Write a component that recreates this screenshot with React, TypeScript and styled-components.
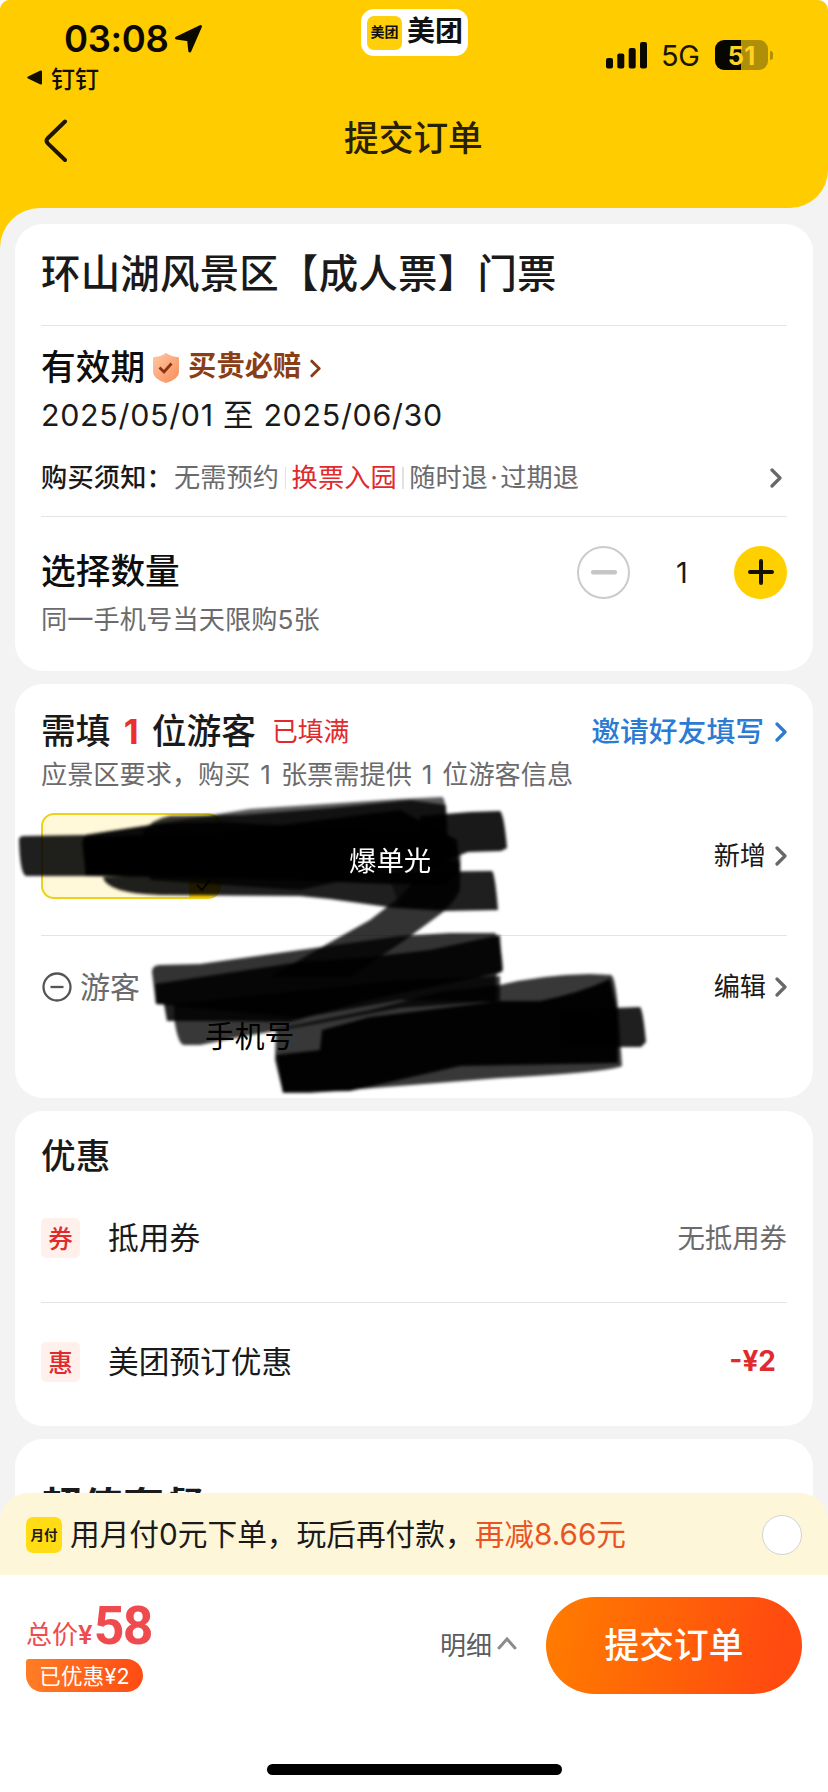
import React from "react";
import styled, { createGlobalStyle } from "styled-components";

const Global = createGlobalStyle`
  * { box-sizing: border-box; }
  html, body { margin: 0; padding: 0; background: #fff; }
  body {
    font-family: Inter, "Noto Sans CJK SC", sans-serif;
    color: #1a1a1a;
    -webkit-font-smoothing: antialiased;
  }
`;

const Screen = styled.div`
  width: 828px;
  height: 1792px;
  display: flex;
  flex-direction: column;
  overflow: hidden;
  background: #fff;
`;

const Viewport = styled.div`
  height: 1575px;
  flex: none;
  overflow: hidden;
  background: linear-gradient(90deg, #ffcc00 50%, #f3f3f4 50%);
  border-radius: 10px 10px 0 0;
`;

const Header = styled.header`
  height: 208px;
  background: #ffcc00;
  border-radius: 0 0 38px 0;
`;

const StatusBar = styled.div`
  height: 96px;
  display: grid;
  grid-template-columns: 361px 107px 1fr;
`;

const StatusLeft = styled.div`
  padding: 17px 0 0 27px;
`;

const Clock = styled.div`
  height: 43px;
  padding-left: 37px;
  display: flex;
  align-items: center;
  gap: 6px;
  font-size: 36.5px;
  font-weight: 600;
  color: #0c0a00;
  letter-spacing: -0.4px;
`;

const BackApp = styled.div`
  height: 34px;
  display: flex;
  align-items: center;
  gap: 9px;
  font-size: 24px;
  font-weight: 500;
  color: #120e00;
`;

const BrandPill = styled.div`
  height: 47px;
  margin-top: 9px;
  padding: 0 6px;
  display: flex;
  align-items: center;
  gap: 5px;
  border-radius: 13px;
  background: #fff;
  font-size: 28px;
  font-weight: 700;
  line-height: 30px;
  color: #111;
  white-space: nowrap;
`;

const BrandName = styled.span`
  padding-bottom: 3px;
`;

const BrandIcon = styled.span`
  width: 35px;
  height: 34px;
  flex: none;
  display: flex;
  align-items: center;
  justify-content: center;
  padding-bottom: 1px;
  border-radius: 7px;
  background: #ffcf0a;
  font-size: 14px;
  font-weight: 700;
`;

const StatusRight = styled.div`
  height: 34px;
  margin-top: 38px;
  padding-left: 138px;
  display: flex;
  align-items: center;
  font-size: 29px;
  font-weight: 400;
  color: #1a1400;
`;

const Network = styled.span`
  width: 52px;
  padding-left: 13px;
  letter-spacing: -0.3px;
`;

const Battery = styled.span`
  width: 53px;
  height: 30px;
  margin-left: 15px;
  display: flex;
  align-items: center;
  justify-content: center;
  border-radius: 9px;
  background: linear-gradient(90deg, #080600 50%, #b08f08 50%);
  font-size: 25.5px;
  font-weight: 700;
  color: #ffd21f;
`;

const BatteryTip = styled.span`
  width: 3px;
  height: 9px;
  margin-left: 2px;
  border-radius: 0 3px 3px 0;
  background: #b08f08;
`;

const TitleBar = styled.div`
  height: 90px;
  padding-left: 44px;
  display: grid;
  grid-template-columns: 300px 1fr;
  align-items: center;
`;

const PageTitle = styled.h1`
  margin: 0;
  padding-bottom: 10px;
  font-size: 34.7px;
  font-weight: 500;
  color: #272005;
`;

const Sheet = styled.main`
  padding: 16px 15px 0;
  min-height: 1400px;
  display: flex;
  flex-direction: column;
  gap: 13px;
  background: #f3f3f4;
  border-radius: 40px 0 0 0;
`;

const Card = styled.section<{ $h: number }>`
  position: relative;
  height: ${(p) => p.$h}px;
  flex: none;
  padding: 0 26px;
  border-radius: 28px;
  background: #fff;
`;

const Row = styled.div<{ $h: number; $line?: boolean; $gap?: number }>`
  height: ${(p) => p.$h}px;
  display: flex;
  align-items: center;
  gap: ${(p) => p.$gap ?? 0}px;
  border-bottom: ${(p) => (p.$line ? "1.5px solid #e4e4e5" : "none")};
  white-space: nowrap;
`;

const Spacer = styled.div<{ $h: number }>`
  height: ${(p) => p.$h}px;
`;

const Push = styled.span`
  flex: 1;
`;

const Gap = styled.span<{ $w: number }>`
  width: ${(p) => p.$w}px;
`;

const Text = styled.span<{ $s: number; $w?: number; $c?: string; $ls?: number; $ws?: number }>`
  font-size: ${(p) => p.$s}px;
  line-height: 1.2;
  font-weight: ${(p) => p.$w ?? 400};
  color: ${(p) => p.$c ?? "#1a1a1a"};
  letter-spacing: ${(p) => p.$ls ?? 0}px;
  word-spacing: ${(p) => p.$ws ?? 0}px;
`;

const RequiredCount = styled.b`
  margin: 0 4px;
  font-weight: 700;
  color: #e9302f;
`;

const Dot = styled.span`
  margin: 0 2.5px;
`;

const Shield = styled.svg`
  margin-left: 7px;
`;

const Guarantee = styled.span`
  margin: 0 9px 0 8px;
  padding-bottom: 5px;
  font-size: 28.3px;
  font-weight: 700;
  line-height: 34px;
  color: #8a3e16;
`;

const Bar = styled.i`
  width: 1.5px;
  height: 22px;
  margin: 0 5.5px;
  background: #e2e2e2;
`;

const RoundButton = styled.button<{ $filled?: boolean }>`
  width: 53px;
  height: 53px;
  padding: 0;
  display: flex;
  align-items: center;
  justify-content: center;
  border-radius: 50%;
  border: ${(p) => (p.$filled ? "none" : "2px solid #cbcbcb")};
  background: ${(p) => (p.$filled ? "#ffd000" : "#fff")};
`;

const Count = styled.span`
  width: 104px;
  text-align: center;
  font-size: 29px;
`;

const VisitorChip = styled.div`
  width: 180px;
  height: 86px;
  display: flex;
  align-items: flex-end;
  justify-content: flex-end;
  overflow: hidden;
  border: 2px solid #ecd21c;
  border-radius: 13px;
  background: #fff8d9;
`;

const ChipCheck = styled.span`
  width: 30px;
  height: 24px;
  display: flex;
  align-items: center;
  justify-content: center;
  background: #ffd000;
`;

const Badge = styled.span`
  width: 39px;
  height: 40px;
  margin-right: 28px;
  padding-bottom: 2px;
  display: flex;
  align-items: center;
  justify-content: center;
  border-radius: 5px;
  background: #fff0eb;
  font-size: 24.5px;
  font-weight: 500;
  color: #e02a2c;
`;

const Marker = styled.svg`
  position: absolute;
  left: -15px;
  top: 96px;
`;

const MarkerText = styled.span`
  position: absolute;
  left: 334px;
  top: 160px;
  font-size: 27.4px;
  line-height: 34px;
  color: #fff;
`;

const Promo = styled.div`
  position: relative;
  flex: none;
  height: 82px;
  margin-top: -82px;
  padding: 2px 26px 0;
  display: flex;
  align-items: center;
  border-radius: 28px 28px 0 0;
  background: #fef6d8;
  white-space: nowrap;
`;

const PromoIcon = styled.span`
  width: 36px;
  height: 36px;
  margin-right: 8px;
  padding-bottom: 3px;
  display: flex;
  align-items: center;
  justify-content: center;
  border-radius: 7px;
  background: #ffdc14;
  font-size: 13.5px;
  font-weight: 700;
`;

const Radio = styled.span`
  width: 40px;
  height: 40px;
  border: 1.5px solid #d2d2d2;
  border-radius: 50%;
  background: #fff;
`;

const Footer = styled.footer`
  height: 141px;
  padding: 22px 26px 0;
  display: flex;
  align-items: flex-start;
`;

const Price = styled.div`
  width: 414px;
  height: 97px;
`;

const Total = styled.div`
  height: 62px;
  display: flex;
  align-items: baseline;
  color: #ef4b4f;
  white-space: nowrap;
`;

const Amount = styled.span`
  margin-left: 1px;
  font: 700 53.5px/58px Roboto, sans-serif;
  letter-spacing: -1.5px;
`;

const Saved = styled.span`
  display: inline-flex;
  width: 117px;
  height: 33px;
  padding-bottom: 3px;
  align-items: center;
  justify-content: center;
  border-radius: 3px 17px 17px 17px;
  background: linear-gradient(90deg, #ff7d25, #ff4b13);
  font-size: 21.5px;
  color: #fff;
  letter-spacing: 0.2px;
`;

const Details = styled.div`
  width: 106px;
  height: 95px;
  padding-bottom: 2px;
  display: flex;
  align-items: center;
  gap: 5px;
  font-size: 26px;
  color: #5c5c5e;
`;

const Submit = styled.button`
  width: 256px;
  height: 97px;
  padding: 0 0 5px;
  border: none;
  border-radius: 49px;
  background: linear-gradient(100deg, #ff7a00 5%, #ff4a10 90%);
  font: 500 34.7px Inter, "Noto Sans CJK SC", sans-serif;
  color: #fff;
`;

const HomeBar = styled.div`
  width: 295px;
  height: 11px;
  margin: 48px 0 0 267px;
  border-radius: 6px;
  background: #000;
`;

const Chevron = ({ color = "#68686a", w = 12, h = 20, sw = 3.2 }) => (
  <svg width={w} height={h} viewBox="0 0 12 20" fill="none">
    <path d="M2 2l8 8-8 8" stroke={color} strokeWidth={sw} strokeLinecap="round" strokeLinejoin="round" />
  </svg>
);

export default function App() {
  return (
    <Screen>
      <Global />
      <Viewport>
        <Header>
          <StatusBar>
            <StatusLeft>
              <Clock>
                03:08
                <svg width="30" height="30" viewBox="0 0 30 30">
                  <path
                    d="M2.500 14 26.500 2.500 15.800 27 14.600 15.800z"
                    fill="#0c0a00"
                    stroke="#0c0a00"
                    strokeWidth="3"
                    strokeLinejoin="round"
                  />
                </svg>
              </Clock>
              <BackApp>
                <svg width="15" height="15" viewBox="0 0 15 15">
                  <path d="M1 6.600 13.500.5q1.500-.3 1.500 1.200v11.600q0 1.500-1.500 1.100L1 8.400q-1.400-.9 0-1.800z" fill="#120e00" />
                </svg>
                钉钉
              </BackApp>
            </StatusLeft>
            <BrandPill>
              <BrandIcon>美团</BrandIcon>
              <BrandName>美团</BrandName>
            </BrandPill>
            <StatusRight>
              <svg width="42" height="27" viewBox="0 0 42 27" fill="#0c0a00">
                <rect x="0" y="16" width="7" height="10.500" rx="2" />
                <rect x="11.300" y="11.500" width="7" height="15" rx="2" />
                <rect x="22.700" y="6" width="7" height="20.500" rx="2" />
                <rect x="34" y="0" width="7" height="26.500" rx="2" />
              </svg>
              <Network>5G</Network>
              <Battery>51</Battery>
              <BatteryTip />
            </StatusRight>
          </StatusBar>
          <TitleBar>
            <svg width="26" height="46" viewBox="0 0 26 46" fill="none">
              <path d="M21 3.500 3.800 20.200q-2.500 2.600 0 5.200L21 42" stroke="#1c1500" strokeWidth="4" strokeLinecap="round" />
            </svg>
            <PageTitle>提交订单</PageTitle>
          </TitleBar>
        </Header>

        <Sheet>
          <Card $h={447}>
            <Row $h={102} $line>
              <Text $s={39.4} $w={500} $ls={0.28}>环山湖风景区【成人票】门票</Text>
            </Row>
            <Spacer $h={20} />
            <Row $h={44}>
              <Text $s={34.7} $w={500} $c="#0e0e0e">有效期</Text>
              <Shield width="28" height="32" viewBox="0 0 28 32">
                <defs>
                  <linearGradient id="shield" x1="0" y1="0" x2="1" y2="1">
                    <stop offset="0" stopColor="#ffc8a4" />
                    <stop offset="1" stopColor="#f98c58" />
                  </linearGradient>
                </defs>
                <path d="M14 1q6 4 12 4 1 0 1 2v13q0 7-13 11Q1 27 1 20V7q0-2 1-2 6 0 12-4z" fill="url(#shield)" />
                <path d="m7.500 15.500 4.500 4.500 7.500-8.500" fill="none" stroke="#8a3512" strokeWidth="2.800" />
              </Shield>
              <Guarantee>买贵必赔</Guarantee>
              <Chevron color="#8a3e16" h={19} w={11} />
            </Row>
            <Row $h={50}>
              <Text $s={30.4} $ls={0.7}>2025/05/01 至 2025/06/30</Text>
            </Row>
            <Spacer $h={14} />
            <Row $h={48}>
              <Text $s={26.2} $w={500} $ls={0.2}>购买须知：</Text>
              <Gap $w={1} />
              <Text $s={26.2} $c="#6b6b6d" $ls={0.1}>无需预约</Text>
              <Bar />
              <Text $s={26.2} $c="#e02a2c" $ls={0.1}>换票入园</Text>
              <Bar />
              <Text $s={26.2} $c="#6b6b6d">随时退<Dot>·</Dot>过期退</Text>
              <Push />
              <Chevron />
              <Gap $w={5} />
            </Row>
            <Row $h={15} $line />
            <Spacer $h={27} />
            <Row $h={56}>
              <Text $s={34.7} $w={500} $c="#0e0e0e">选择数量</Text>
              <Push />
              <RoundButton>
                <svg width="26" height="5"><rect width="26" height="4.500" rx="2" fill="#c6c6c6" /></svg>
              </RoundButton>
              <Count>1</Count>
              <RoundButton $filled>
                <svg width="28" height="28" viewBox="0 0 28 28" stroke="#161200" strokeWidth="4" strokeLinecap="round">
                  <path d="M3 14h22M14 3v22" />
                </svg>
              </RoundButton>
            </Row>
            <Row $h={40}>
              <Text $s={26.2} $c="#6b6b6d" $ls={0.1}>同一手机号当天限购5张</Text>
            </Row>
          </Card>

          <Card $h={414}>
            <Spacer $h={24} />
            <Row $h={48}>
              <Text $s={34.7} $w={500}>
                需填 <RequiredCount>1</RequiredCount> 位游客
              </Text>
              <Gap $w={16} />
              <Text $s={25.8} $c="#e02a2c">已填满</Text>
              <Push />
              <Text $s={28.8} $w={500} $c="#2b7bd2">邀请好友填写</Text>
              <Gap $w={11} />
              <Chevron color="#2b7bd2" />
            </Row>
            <Row $h={38}>
              <Text $s={26.2} $c="#6b6b6d" $ws={2.5}>应景区要求，购买 1 张票需提供 1 位游客信息</Text>
            </Row>
            <Spacer $h={19} />
            <Row $h={86}>
              <VisitorChip>
                <ChipCheck>
                  <svg width="16" height="14" fill="none" stroke="#222" strokeWidth="2"><path d="m1 7 5 5 9-11" /></svg>
                </ChipCheck>
              </VisitorChip>
              <Push />
              <Text $s={26.2}>新增</Text>
              <Gap $w={9} />
              <Chevron />
            </Row>
            <Row $h={37} $line />
            <Spacer $h={26} />
            <Row $h={50}>
              <svg width="32" height="32" viewBox="0 0 32 32" fill="none" stroke="#555" strokeWidth="2.300">
                <circle cx="16" cy="16" r="13.500" />
                <path d="M9.500 16h13" />
              </svg>
              <Gap $w={7} />
              <Text $s={30} $c="#6b6b6d">游客</Text>
              <Push />
              <Text $s={26.2}>编辑</Text>
              <Gap $w={9} />
              <Chevron />
            </Row>
            <Row $h={50}>
              <Gap $w={164} />
              <Text $s={29.8} $c="#000">手机号</Text>
            </Row>
            <Marker width="680" height="320" viewBox="0 780 680 320">
              <defs>
                <filter id="soft" x="-5%" y="-5%" width="110%" height="110%">
                  <feGaussianBlur stdDeviation="1.700" />
                </filter>
              </defs>
              <g filter="url(#soft)" fill="#000">
                <path opacity=".88" d="M19 840q0-4 5-4L85 835 165 823 225 822 445 835 445 866 300 876 26 876Q20 874 19 840z" />
                <path opacity=".65" d="M85 835 143 826 250 809 400 799 442 797Q446 797 448 835L300 870 85 876z" />
                <path opacity=".8" d="M143 832Q152 819 170 816L240 815 330 808 410 800 446 805 447 858 300 890 150 880z" />
                <path opacity=".93" d="M82 843 84 837 220 833 400 810 457 840 460 870 445 885 390 884 230 878 86 876z" />
                <path opacity=".9" d="M420 816 470 812 500 811Q504 814 507 848L501 851 468 852 420 870z" />
                <path opacity=".88" d="M103 877 260 870 400 872 492 871Q495 873 498 910L445 911 395 908 330 899 300 896 160 895Q106 893 103 877z" />
                <path opacity=".8" d="M435 858 460 862 460 890Q452 907 435 918L405 940 350 977 270 977 320 948 370 920 400 897z" />
                <path opacity=".5" d="M388 875 448 838 461 855 460 890Q453 903 440 908L400 907z" />

                <path opacity=".8" d="M152 972Q152 965 160 965L200 964 300 950 400 936 450 933 495 933Q501 939 503 970L496 975 496 1002 400 1000 300 1018 156 1004z" />
                <path opacity=".88" d="M155 984 300 962 370 957 430 950 500 935 502 972 360 1002 290 1022 220 1021 167 1021 164 1004 156 1004z" />
                <path opacity=".78" d="M174 1004 400 980 500 976 500 1001 400 1008 310 1025 240 1037 200 1045 184 1045Q178 1045 174 1018z" />
                <path opacity=".78" d="M276 1029 370 1010 440 992 500 985Q540 975 590 974L611 975Q615 976 618 1008L622 1066Q610 1072 500 1078L310 1093 283 1093 275 1060z" />
                <path opacity=".97" d="M370 1017 500 1001 540 1001Q580 993 610 979L617 1010 618 1063 460 1066 350 1091 283 1092 276 1055 320 1050 322 1030z" />
                <path opacity=".88" d="M560 1010 640 1007Q643 1010 646 1042L641 1047 560 1047z" />
              </g>
            </Marker>
            <MarkerText>爆单光</MarkerText>
          </Card>

          <Card $h={315}>
            <Spacer $h={18} />
            <Row $h={55}>
              <Text $s={34.7} $w={500}>优惠</Text>
            </Row>
            <Spacer $h={24} />
            <Row $h={60}>
              <Badge>券</Badge>
              <Text $s={30.7}>抵用券</Text>
              <Push />
              <Text $s={27.4} $c="#6b6b6d">无抵用券</Text>
            </Row>
            <Row $h={35} $line />
            <Spacer $h={29} />
            <Row $h={60}>
              <Badge>惠</Badge>
              <Text $s={30.7}>美团预订优惠</Text>
              <Push />
              <Text $s={28} $w={700} $c="#e02a2c">-¥2</Text>
              <Gap $w={11} />
            </Row>
          </Card>

          <Card $h={200}>
            <Spacer $h={39} />
            <Row $h={60}>
              <Text $s={41} $w={700}>超值套餐</Text>
            </Row>
          </Card>
        </Sheet>
      </Viewport>

      <Promo>
        <PromoIcon>月付</PromoIcon>
        <Text $s={29.7}>用月付0元下单，玩后再付款，</Text>
        <Text $s={29.7} $c="#ea5424">再减8.66元</Text>
        <Push />
        <Radio />
      </Promo>

      <Footer>
        <Price>
          <Total>
            <Text $s={26} $c="#ef4b4f">总价</Text>
            <Text $s={26} $w={600} $c="#ef4b4f">¥</Text>
            <Amount>58</Amount>
          </Total>
          <Saved>已优惠¥2</Saved>
        </Price>
        <Details>
          明细
          <svg width="20" height="13" viewBox="0 0 20 13" fill="none">
            <path d="m2 11 8-9 8 9" stroke="#8c8c8e" strokeWidth="3" strokeLinecap="round" />
          </svg>
        </Details>
        <Submit>提交订单</Submit>
      </Footer>
      <HomeBar />
    </Screen>
  );
}
